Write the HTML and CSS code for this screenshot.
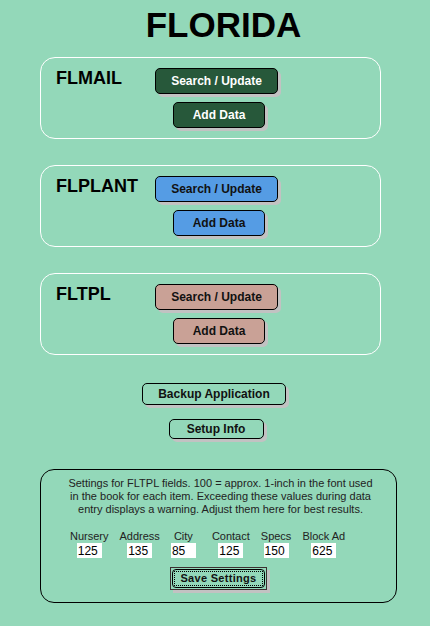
FILE: index.html
```html
<!DOCTYPE html>
<html lang="en">
<head>
  <meta charset="UTF-8">
  <meta name="viewport" content="width=device-width, initial-scale=1.0">
  <title>Florida</title>
  <link rel="stylesheet" href="styles.css">
</head>
<body>
  <h1 class="title">FLORIDA</h1>

  <div class="book">
    <div class="book-name">FLMAIL</div>
    <div class="book-actions">
      <button class="btn btn-search green">Search / Update</button>
      <button class="btn btn-add green">Add Data</button>
    </div>
  </div>

  <div class="book">
    <div class="book-name">FLPLANT</div>
    <div class="book-actions">
      <button class="btn btn-search blue">Search / Update</button>
      <button class="btn btn-add blue">Add Data</button>
    </div>
  </div>

  <div class="book">
    <div class="book-name">FLTPL</div>
    <div class="book-actions">
      <button class="btn btn-search pink">Search / Update</button>
      <button class="btn btn-add pink">Add Data</button>
    </div>
  </div>

  <div class="tools">
    <button class="btn btn-backup">Backup Application</button>
    <button class="btn btn-setup">Setup Info</button>
  </div>

  <div class="settings">
    <p class="settings-note">Settings for FLTPL fields. 100 = approx. 1-inch in the font used<br>in the book for each item. Exceeding these values during data<br>entry displays a warning. Adjust them here for best results.</p>
    <div class="fields">
      <label class="field"><span>Nursery</span><input type="text" value="125"></label>
      <label class="field"><span>Address</span><input type="text" value="135"></label>
      <label class="field field-city"><span>City</span><input type="text" value="85"></label>
      <label class="field"><span>Contact</span><input type="text" value="125"></label>
      <label class="field"><span>Specs</span><input type="text" value="150"></label>
      <label class="field"><span>Block Ad</span><input type="text" value="625"></label>
    </div>
    <button class="save"><span class="save-ring"><span class="save-focus">Save Settings</span></span></button>
  </div>
</body>
</html>
```

FILE: styles.css
```css
body { margin: 0; width: 430px; background: #93d8b9; font-family: "Liberation Sans", Arial, sans-serif; color: #111; }
.title { margin: 5px 0 12px; padding-left: 17px; font-size: 35px; line-height: 40px; text-align: center; font-weight: bold; color: #000; }

.book { display: flex; box-sizing: border-box; width: 341px; height: 82px; margin: 0 0 26px 40px; padding: 10px 0 10px 15px; border: 1px solid #fff; border-radius: 15px; }
.book-name { width: 99px; font-size: 18px; line-height: 20px; font-weight: bold; color: #000; }
.book-actions { display: flex; flex-direction: column; align-items: flex-start; gap: 8px; }

.btn { box-sizing: border-box; height: 26px; padding: 0; border: 1px solid #000; border-radius: 5px; box-shadow: 3px 3px 0 #c2c2c2; font-family: "Liberation Sans", Arial, sans-serif; font-size: 12px; font-weight: bold; color: #111; cursor: pointer; }
.btn-search { width: 123px; }
.btn-add { width: 92px; margin-left: 18px; }
.green { background: #27583a; color: #fff; }
.blue { background: #559ce4; }
.pink { background: #c9a196; }

.tools { display: flex; flex-direction: column; align-items: center; gap: 14px; margin-top: 28px; padding-right: 2px; }
.btn-backup { width: 144px; height: 22px; background: transparent; }
.btn-setup { width: 95px; height: 20px; margin-left: 4px; background: transparent; }

.settings { box-sizing: border-box; width: 357px; margin: 30px 0 0 40px; padding: 7px 0 12px; border: 1px solid #000; border-radius: 14px; text-align: center; }
.settings-note { margin: 0 0 0 4px; font-size: 11px; line-height: 13px; white-space: nowrap; color: #222; }
.fields { display: flex; gap: 11px; margin: 14px 0 0 29px; }
.field { display: flex; flex-direction: column; align-items: center; font-size: 11px; line-height: 13px; color: #222; }
.field-city { margin-right: 5px; }
.field input { box-sizing: border-box; width: 25px; height: 15px; margin: 0; padding: 0 0 0 1px; border: 0; background: #fff; font-family: "Liberation Sans", Arial, sans-serif; font-size: 12px; color: #000; }

.save { display: block; box-sizing: border-box; width: 97px; height: 23px; margin: 9px auto 0; padding: 1px; border: 1px solid #3c3030; border-radius: 0; background: transparent; box-shadow: 3px 3px 0 #c2c2c2; font-family: "Liberation Sans", Arial, sans-serif; cursor: pointer; }
.save-ring { display: block; height: 100%; box-sizing: border-box; padding: 1px; border: 1px solid #000; border-radius: 4px; }
.save-focus { display: block; height: 100%; box-sizing: border-box; border: 1px dotted #000; font-size: 11px; line-height: 13px; font-weight: bold; letter-spacing: 0.3px; color: #111; }
```
